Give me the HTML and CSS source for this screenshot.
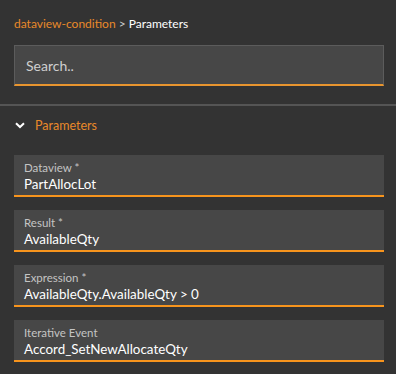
FILE: index.html
```html
<!DOCTYPE html>
<html lang="en">
<head>
    <meta charset="UTF-8">
    <title>Parameters</title>
    <link rel="stylesheet" href="styles.css">
</head>
<body>
    <div class="top">
        <div class="breadcrumb">
            <span class="crumb-link">dataview-condition</span>
            <span class="crumb-sep">&gt;</span>
            <span class="crumb-current">Parameters</span>
        </div>
        <input class="search" type="text" placeholder="Search..">
    </div>

    <div class="section">
        <div class="section-head">
            <svg class="chevron" width="10" height="7" viewBox="0 0 10 7">
                <path d="M1 1.2 L5 5 L9 1.2" fill="none" stroke="#ffffff" stroke-width="2"/>
            </svg>
            <span>Parameters</span>
        </div>

        <div class="field">
            <label>Dataview *</label>
            <div class="value">PartAllocLot</div>
        </div>
        <div class="field">
            <label>Result *</label>
            <div class="value">AvailableQty</div>
        </div>
        <div class="field">
            <label>Expression *</label>
            <div class="value">AvailableQty.AvailableQty &gt; 0</div>
        </div>
        <div class="field">
            <label>Iterative Event</label>
            <div class="value">Accord_SetNewAllocateQty</div>
        </div>
    </div>
</body>
</html>
```

FILE: styles.css
```css
body {
    margin: 0;
    background-color: #333333;
    font-family: Lato, "Noto Sans", sans-serif;
    color: #ffffff;
}
.top {
    padding: 15px 12px 18px 14px;
    border-bottom: 2px solid #555555;
}
.breadcrumb {
    font-size: 12px;
    line-height: 18px;
    margin-bottom: 12px;
}
.crumb-link { color: #e8892a; }
.crumb-sep { color: #cccccc; }
.crumb-current { color: #ffffff; }
.search {
    display: block;
    box-sizing: border-box;
    width: 100%;
    height: 41px;
    padding: 0 11px;
    background-color: #474747;
    border: 1px solid #5c5c5c;
    border-bottom: 2px solid #e8952f;
    color: #ffffff;
    font-family: inherit;
    font-size: 14px;
    outline: none;
}
.search::placeholder { color: #cfcfcf; }
.section {
    padding: 0 12px 0 14px;
}
.section-head {
    display: flex;
    align-items: center;
    height: 38px;
    padding-left: 1px;
    margin-bottom: 11px;
    color: #e8892a;
    font-size: 12.5px;
}
.chevron { margin-right: 10px; }
.field {
    box-sizing: border-box;
    height: 42px;
    margin-bottom: 13px;
    padding: 6px 10px 0 10px;
    background-color: #474747;
    border-bottom: 2px solid #f7941d;
}
.field label {
    display: block;
    font-size: 11.5px;
    line-height: 14px;
    color: #c4c4c4;
}
.field .value {
    font-size: 13.4px;
    line-height: 18px;
    color: #ffffff;
}
```
